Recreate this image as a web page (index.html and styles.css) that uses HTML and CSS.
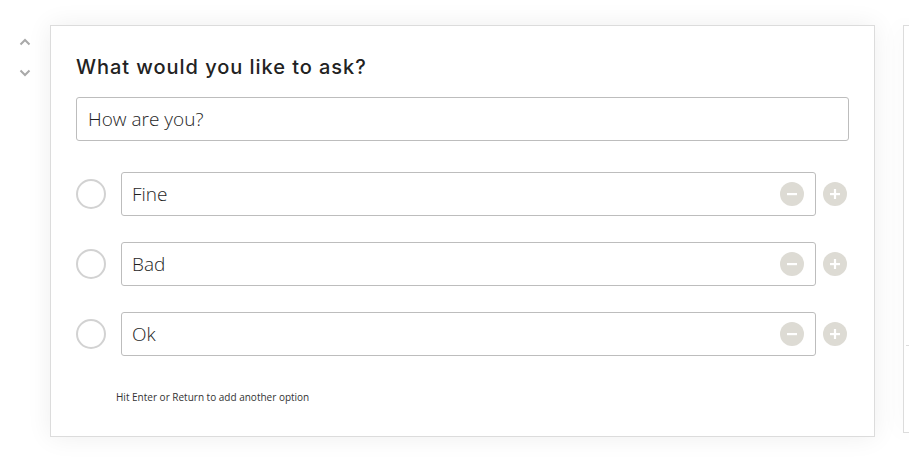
FILE: index.html
```html
<!DOCTYPE html>
<html>
<head>
<meta charset="utf-8">
<link rel="stylesheet" href="styles.css">
</head>
<body>
<div class="page">
  <div class="arrows">
    <svg class="chev" width="12" height="8" viewBox="0 0 12 8"><path d="M1.5 6.5 L6 2 L10.5 6.5" fill="none" stroke="#a9a9a9" stroke-width="2"/></svg>
    <svg class="chev" width="12" height="8" viewBox="0 0 12 8"><path d="M1.5 1.5 L6 6 L10.5 1.5" fill="none" stroke="#a9a9a9" stroke-width="2"/></svg>
  </div>
  <div class="card">
    <h2 class="title">What would you like to ask?</h2>
    <div class="question">How are you?</div>
    <div class="options">
      <div class="option">
        <span class="radio"></span>
        <div class="field"><span class="val">Fine</span>
          <svg class="btn minus" width="24" height="24" viewBox="0 0 24 24"><circle cx="12" cy="12" r="12" fill="#dddbd4"/><rect x="7" y="11" width="10" height="2.2" fill="#fff"/></svg>
        </div>
        <svg class="btn plus" width="24" height="24" viewBox="0 0 24 24"><circle cx="12" cy="12" r="12" fill="#dddbd4"/><rect x="7" y="11" width="10" height="2.2" fill="#fff"/><rect x="10.9" y="7" width="2.2" height="10" fill="#fff"/></svg>
      </div>
      <div class="option">
        <span class="radio"></span>
        <div class="field"><span class="val">Bad</span>
          <svg class="btn minus" width="24" height="24" viewBox="0 0 24 24"><circle cx="12" cy="12" r="12" fill="#dddbd4"/><rect x="7" y="11" width="10" height="2.2" fill="#fff"/></svg>
        </div>
        <svg class="btn plus" width="24" height="24" viewBox="0 0 24 24"><circle cx="12" cy="12" r="12" fill="#dddbd4"/><rect x="7" y="11" width="10" height="2.2" fill="#fff"/><rect x="10.9" y="7" width="2.2" height="10" fill="#fff"/></svg>
      </div>
      <div class="option">
        <span class="radio"></span>
        <div class="field"><span class="val">Ok</span>
          <svg class="btn minus" width="24" height="24" viewBox="0 0 24 24"><circle cx="12" cy="12" r="12" fill="#dddbd4"/><rect x="7" y="11" width="10" height="2.2" fill="#fff"/></svg>
        </div>
        <svg class="btn plus" width="24" height="24" viewBox="0 0 24 24"><circle cx="12" cy="12" r="12" fill="#dddbd4"/><rect x="7" y="11" width="10" height="2.2" fill="#fff"/><rect x="10.9" y="7" width="2.2" height="10" fill="#fff"/></svg>
      </div>
    </div>
    <p class="hint">Hit Enter or Return to add another option</p>
  </div>
  <div class="card2">
    <div class="card2-body"></div>
  </div>
</div>
</body>
</html>
```
FILE: styles.css
```css
html, body {
  margin: 0;
  padding: 0;
  background: #ffffff;
  overflow: hidden;
}
body {
  width: 909px;
  height: 465px;
  font-family: "Open Sans", "Liberation Sans", sans-serif;
  color: #2b2b2b;
}
.page {
  display: flex;
  align-items: flex-start;
  padding-top: 25px;
  width: 909px;
  box-sizing: border-box;
}
.arrows {
  width: 50px;
  flex: none;
  display: flex;
  flex-direction: column;
  align-items: center;
  gap: 23px;
  padding-top: 13px;
  padding-right: 1px;
  box-sizing: border-box;
}
.chev { display: block; }
.card {
  width: 825px;
  height: 412px;
  box-sizing: border-box;
  border: 1px solid #dcdcdc;
  background: #fff;
  box-shadow: 0 0 24px rgba(0,0,0,0.07);
  padding: 29px 25px 0 25px;
  flex: none;
}
.title {
  margin: 0;
  font-family: Inter, "Open Sans", sans-serif;
  font-weight: 500;
  font-size: 20px;
  line-height: 24px;
  letter-spacing: 0.95px;
  color: #222;
}
.question {
  margin-top: 18px;
  height: 44px;
  box-sizing: border-box;
  border: 1px solid #bdbdbd;
  border-radius: 3px;
  padding-left: 11px;
  display: flex;
  align-items: center;
  font-size: 19px;
  font-weight: 300;
  color: #1e1e1e;
}
.options {
  margin-top: 31px;
  display: flex;
  flex-direction: column;
  gap: 26px;
}
.option {
  display: flex;
  align-items: center;
  height: 44px;
}
.radio {
  width: 30px;
  height: 30px;
  box-sizing: border-box;
  border: 2px solid #d2d2d2;
  border-radius: 50%;
  flex: none;
  margin-right: 15px;
}
.field {
  position: relative;
  width: 695px;
  height: 44px;
  box-sizing: border-box;
  border: 1px solid #bdbdbd;
  border-radius: 3px;
  padding-left: 10px;
  display: flex;
  align-items: center;
  font-size: 19px;
  font-weight: 300;
  color: #1e1e1e;
  flex: none;
}
.btn { display: block; flex: none; }
.minus {
  position: absolute;
  right: 11px;
  top: 9px;
}
.plus {
  margin-left: 7px;
}
.hint {
  margin: 35px 0 0 40px;
  font-size: 10px;
  line-height: 12px;
  color: #333;
}
.card2 {
  margin-left: 28px;
  flex: 1 1 auto;
  min-width: 0;
  height: 408px;
  box-sizing: border-box;
  border: 1px solid #dcdcdc;
  border-right: none;
  background: #fff;
  box-shadow: 0 0 24px rgba(0,0,0,0.07);
}
.card2-body { height: 319px; border-bottom: 1px solid #dcdcdc; margin-left: 2px; }
```
